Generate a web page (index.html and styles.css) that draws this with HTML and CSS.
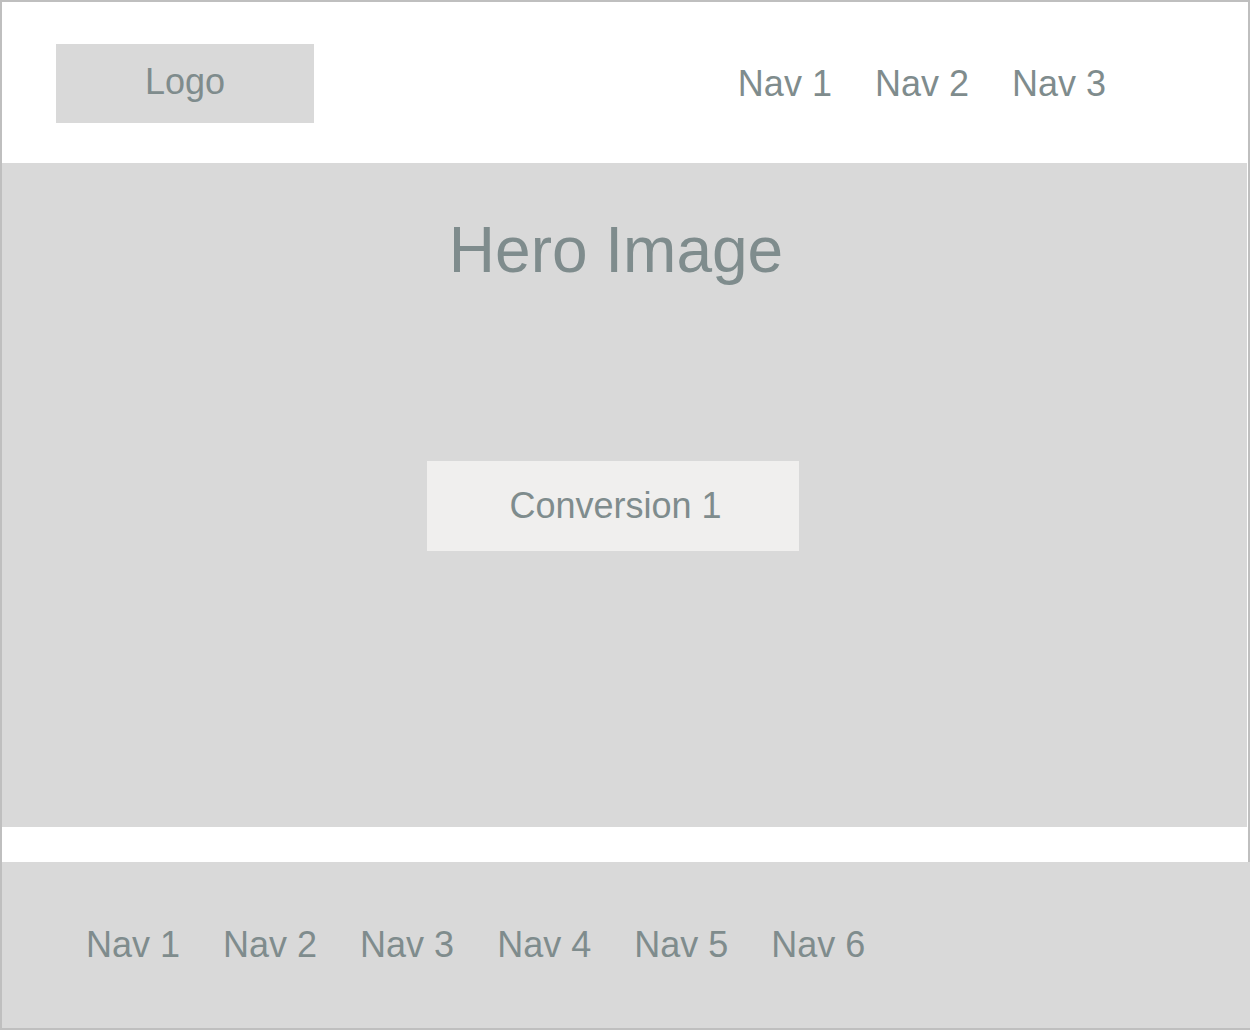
FILE: index.html
```html
<!DOCTYPE html>
<html>
<head>
<meta charset="utf-8">
<title>Wireframe</title>
<link rel="stylesheet" href="styles.css">
</head>
<body>
<div class="page">
  <header class="header">
    <div class="logo">Logo</div>
    <nav class="top-nav">
      <span class="nav-item">Nav 1</span>
      <span class="nav-item">Nav 2</span>
      <span class="nav-item">Nav 3</span>
    </nav>
  </header>
  <section class="hero">
    <h1 class="hero-title">Hero Image</h1>
    <div class="cta">Conversion 1</div>
  </section>
  <div class="spacer"></div>
  <footer class="footer">
    <span class="nav-item">Nav 1</span>
    <span class="nav-item">Nav 2</span>
    <span class="nav-item">Nav 3</span>
    <span class="nav-item">Nav 4</span>
    <span class="nav-item">Nav 5</span>
    <span class="nav-item">Nav 6</span>
  </footer>
</div>
</body>
</html>
```
FILE: styles.css
```css
html, body {
  margin: 0;
  padding: 0;
  background: #ffffff;
}
body {
  font-family: "Liberation Sans", Arial, sans-serif;
  color: #7f8c8d;
}
.page {
  box-sizing: border-box;
  width: 1250px;
  height: 1030px;
  border: 2px solid #bfbfbf;
  display: flex;
  flex-direction: column;
  background: #ffffff;
}
.header {
  box-sizing: border-box;
  height: 161px;
  flex: none;
  display: flex;
  align-items: center;
  padding-top: 2px;
  padding-left: 54px;
  padding-right: 142px;
}
.logo {
  box-sizing: border-box;
  width: 258px;
  height: 79px;
  background: #d9d9d9;
  display: flex;
  align-items: center;
  justify-content: center;
  font-size: 36px;
  padding-bottom: 4px;
}
.top-nav {
  margin-left: auto;
  display: flex;
  gap: 43px;
}
.nav-item {
  font-size: 36px;
  white-space: nowrap;
}
.hero {
  box-sizing: border-box;
  height: 664px;
  flex: none;
  margin-right: 1px;
  background: #d9d9d9;
  display: flex;
  flex-direction: column;
  align-items: center;
  padding-top: 50px;
  padding-right: 23px;
}
.hero-title {
  margin: 0 0 0 6px;
  font-size: 64px;
  font-weight: normal;
  line-height: normal;
}
.cta {
  box-sizing: border-box;
  margin-top: 174px;
  width: 372px;
  height: 90px;
  padding-left: 5px;
  background: #f0efee;
  display: flex;
  align-items: center;
  justify-content: center;
  font-size: 36px;
}
.spacer {
  height: 35px;
  flex: none;
}
.footer {
  height: 166px;
  flex: none;
  margin-right: -2px;
  background: #d9d9d9;
  display: flex;
  align-items: center;
  gap: 43px;
  padding-left: 84px;
}
```
